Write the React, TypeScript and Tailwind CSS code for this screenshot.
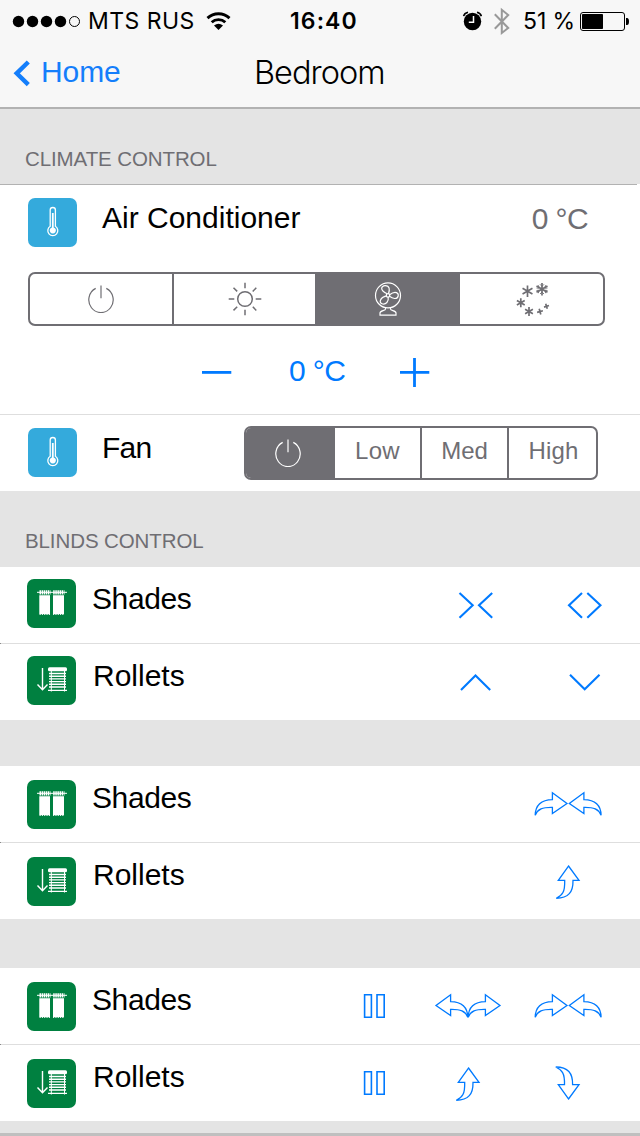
import type { ReactNode } from "react";

const RIGHT_ARROW = "M1.2 31.2C1.4 21.5 6.5 15.9 18.4 15.6V8.8L33 19.5L18.4 29.6V23.4C8.5 23.2 3.8 25 1.2 31.2Z";

function Thermometer() {
  return (
    <svg className="size-[49px] shrink-0" viewBox="0 0 49 49" fill="none">
      <rect width="49" height="49" rx="7" fill="#34aadc" />
      <path d="M22.2 28.3V12Q22.2 9.5 24.8 9.5Q27.4 9.5 27.4 12V28.3A5 5 0 1 1 22.2 28.3Z" stroke="#fff" strokeWidth="1.3" />
      <path d="M23.9 15h1.8v14.4a3.1 3.1 0 1 1-1.8 0Z" fill="#fff" />
    </svg>
  );
}

function ShadesTile() {
  return (
    <svg className="size-[49px]" viewBox="0 0 49 49" fill="none" stroke="#fff">
      <rect width="49" height="49" rx="7" fill="#008040" stroke="none" />
      <path d="M10 13.3H40" strokeWidth="1" />
      <path d="M12.5 13.3H23.5M26.2 13.3H37.5" strokeWidth="4.2" strokeDasharray="1.5 .6" />
      <path d="M12.3 16.2H23V35H12.3ZM26 16.2H37V35H26Z" fill="#fff" stroke="none" />
      <path d="M12.5 35.4H23M26 35.4H37" strokeWidth="1" strokeDasharray="1.3 1" />
    </svg>
  );
}

function RolletsTile() {
  return (
    <svg className="size-[49px]" viewBox="0 0 49 49" fill="none" stroke="#fff">
      <rect width="49" height="49" rx="7" fill="#008040" stroke="none" />
      <path d="M15.5 12V33.5M10.5 28.5L15.5 33.8L20.5 28.5" strokeWidth="1.4" />
      <rect x="21" y="11.2" width="19" height="4" rx="1.5" fill="#fff" stroke="none" />
      <path d="M24.3 15V35.5M37.5 15V35.5" strokeWidth="1" />
      <path d="M22 17.5H39M22 20.2H39M22 22.9H39M22 25.6H39M22 28.3H39M22 31H39M21 34.4H40" strokeWidth="1.4" />
    </svg>
  );
}

function Power() {
  return (
    <svg className="h-7 w-7" viewBox="0 0 28 28" fill="none" stroke="currentColor" strokeWidth="1.2">
      <path d="M14 .4V13.2M8.7 3.4A12.2 12.7 0 1 0 19.3 3.4" />
    </svg>
  );
}

function Sun() {
  return (
    <svg className="size-[34px]" viewBox="0 0 34 34" fill="none" stroke="currentColor" strokeWidth="1.5">
      <circle cx="17" cy="17" r="7.3" />
      <path d="M17 .8V6.2M17 27.8V33.2M.7 17H6.3M27.7 17H33.3M5.5 5.7L9.2 9.4M24.8 24.8L28.3 28.4M28.3 5.7L24.7 9.4M9.2 24.8L5.5 28.4" />
    </svg>
  );
}

function FanIcon() {
  return (
    <svg className="h-[34px] w-7" viewBox="0 0 28 34" fill="none" stroke="currentColor" strokeWidth="1.2">
      <circle cx="14" cy="13.4" r="12.5" />
      <circle cx="14" cy="13.4" r="1.7" />
      <path d="M13.2 11.8C5 8 7.3 3.6 11.2 3.7C15.7 3.8 16 7.5 14.5 11.7M15.6 12.7C22 7.8 24.7 11.6 24.2 14C23.2 18 18.4 16.5 15.5 14.3M14.2 15C15 20 11.7 22.4 8.8 22C4.3 21.2 5.8 15.5 12.5 13.9M11.5 26V27C11.5 28.8 6 28.5 6 31V33.2H22V31C22 28.5 16.5 28.8 16.5 27V26" />
    </svg>
  );
}

function Flake({ x, y, r, arms = 6 }: { x: number; y: number; r: number; arms?: number }) {
  return (
    <g transform={`translate(${x} ${y})`}>
      {arms === 4 ? (
        <path d={`M-${r} .8L${r} -.8M-.8 -${r}L.8 ${r}`} />
      ) : (
        <path d={`M0 -${r}V${r}M-${r * 0.87} -${r / 2}L${r * 0.87} ${r / 2}M-${r * 0.87} ${r / 2}L${r * 0.87} -${r / 2}`} />
      )}
    </g>
  );
}

function Snow() {
  return (
    <svg className="ml-[2px] h-[34px] w-[34px]" viewBox="0 0 34 34" fill="none" stroke="currentColor" strokeWidth="1.7">
      <Flake x={11.5} y={9.2} r={5.7} />
      <Flake x={26} y={7.2} r={6.3} />
      <path d="M24 2.3L26 4.3L28 2.3M24 12L26 10L28 12M20.5 6L23.2 6.2L22.3 3.2M31.5 6L28.8 6.2L29.7 3.2M20.5 8.5L23.2 8.2L22.3 11.2M31.5 8.5L28.8 8.2L29.7 11.2" strokeWidth=".9" />
      <Flake x={4.8} y={20.7} r={4.5} />
      <Flake x={13} y={29.5} r={4.5} />
      <Flake x={24} y={29.6} r={2.9} arms={4} />
      <Flake x={30.5} y={24.3} r={2.5} arms={4} />
    </svg>
  );
}

function Action({ children, bold = false, label }: { children: ReactNode; bold?: boolean; label: string }) {
  return (
    <button aria-label={label} className="mt-[18px] h-10 w-[68px] text-[#007aff]">
      <svg className="h-10 w-[68px]" viewBox="0 0 68 40" fill="none" stroke="currentColor" strokeWidth={bold ? 2.1 : 1.3}>
        {children}
      </svg>
    </button>
  );
}

const Pause = () => (
  <Action label="Pause">
    <path d="M24.6 8.8H31.4V31.2H24.6ZM37 8.8H44.2V31.2H37Z" strokeWidth="1.6" />
  </Action>
);
const Inward = () => (
  <Action label="Close">
    <path d={RIGHT_ARROW} />
    <path d={RIGHT_ARROW} transform="matrix(-1 0 0 1 68.3 0)" />
  </Action>
);
const Outward = () => (
  <Action label="Open">
    <path d={RIGHT_ARROW} transform="matrix(-1 0 0 1 35 0)" />
    <path d={RIGHT_ARROW} transform="translate(33 0)" />
  </Action>
);
const RaiseArrow = () => (
  <Action label="Raise">
    <path d="M34.5 5L45 19.4H39C39.2 31 34.5 37.2 22.3 37.3C28.5 34.3 31 31 30.7 19.4H24.3Z" />
  </Action>
);
const LowerArrow = () => (
  <Action label="Lower">
    <path d="M34.5 36L45 21.6H38.6C38.8 10 34 4.1 21.8 4C28 7 30.8 10 30.5 21.6H24.3Z" />
  </Action>
);

function Divider() {
  return (
    <div className="h-px bg-[#dedede]">
      <div className="h-px w-px bg-[#8a8a8a]" />
    </div>
  );
}

function BlindRow({ kind, low, actions }: { kind: "Shades" | "Rollets"; low?: boolean; actions: ReactNode }) {
  return (
    <div className="flex h-[76px] items-start bg-white pr-[38px] pl-[27px]">
      <div className={low ? "mt-[14px]" : "mt-3"}>{kind === "Shades" ? <ShadesTile /> : <RolletsTile />}</div>
      <span className={kind === "Shades" ? "mt-[17px] ml-4 text-[30px] leading-[30px] tracking-[-0.4px]" : "mt-[17px] ml-[17px] text-[30px] leading-[30px]"}>{kind}</span>
      <div className="ml-auto flex">{actions}</div>
    </div>
  );
}

function StatusBar() {
  return (
    <div className="grid h-10 grid-cols-[290px_80px_1fr] items-center font-['Inter',sans-serif] text-[23px] leading-10 whitespace-nowrap">
      <div className="flex items-center pl-3">
        <svg className="h-10 w-[70px]" viewBox="0 0 70 40">
          <circle cx="6.5" cy="20.5" r="5.7" />
          <circle cx="20.5" cy="20.5" r="5.7" />
          <circle cx="34.5" cy="20.5" r="5.7" />
          <circle cx="48.5" cy="20.5" r="5.7" />
          <circle cx="62.5" cy="20.5" r="5" fill="none" stroke="#000" strokeWidth="1" />
        </svg>
        <span className="ml-[6px] w-[117px] pt-px tracking-[0.45px]">MTS RUS</span>
        <svg className="h-10 w-7" viewBox="0 0 28 40" fill="none" stroke="#000" strokeWidth="2.9">
          <path d="M2.5 17.1A16 16 0 0 1 24.5 17.1M6.7 21.3A10 10 0 0 1 20.3 21.3" />
          <path d="M9 24.4Q13.5 21 18 24.4L13.5 29Z" fill="#000" stroke="none" />
        </svg>
      </div>
      <span className="pt-px font-semibold tracking-[1.1px]">16:40</span>
      <div className="flex items-center">
        <svg className="ml-[92px] h-10 w-5" viewBox="0 0 20 40" fill="none">
          <circle cx="10.5" cy="20.5" r="8.7" fill="#000" />
          <path d="M1.6 15.2Q2.3 12 6 11.2M15 11.2Q18.6 12 19.4 15.2" stroke="#000" strokeWidth="1.6" />
          <path d="M11.5 15V21.3H6.8" stroke="#fff" strokeWidth="1.5" />
        </svg>
        <svg className="ml-3 h-10 w-4" viewBox="0 0 16 40" fill="none" stroke="#999" strokeWidth="2">
          <path d="M.8 13.3L14.2 27L7.8 32V8.8L14.2 14L.8 27.7" />
        </svg>
        <span className="ml-[13px] w-[57px] pt-px tracking-[-0.1px]">51 %</span>
        <svg className="h-10 w-[50px]" viewBox="0 0 50 40">
          <rect x=".5" y="11.5" width="44" height="18" rx="2.5" fill="none" stroke="#000" />
          <rect x="2" y="13" width="21" height="15" rx=".8" />
          <path d="M46 17H47Q49 17 49 20.5Q49 24 47 24H46Z" />
        </svg>
      </div>
    </div>
  );
}

export default function App() {
  return (
    <main className="flex h-[1136px] w-[640px] flex-col overflow-hidden bg-[#e4e4e4] font-['Liberation_Sans',Arial,sans-serif] text-black">
      <header className="h-[109px] border-b-2 border-[#b2b2b2] bg-[#f7f7f7]">
        <StatusBar />
        <nav className="grid h-[67px] grid-cols-[254px_1fr] items-start">
          <button className="flex items-start pl-[13px] text-[#147efb]">
            <svg className="mt-5 h-7 w-[18px]" viewBox="0 0 18 28" fill="none" stroke="currentColor" strokeWidth="4.4">
              <path d="M15.3 2L3.7 13.3L15.3 24.6" />
            </svg>
            <span className="mt-[17px] ml-[10px] text-[30px] leading-[30px] tracking-[-0.1px]">Home</span>
          </button>
          <h1 className="mt-[15px] font-['Inter',sans-serif] text-[32.5px] leading-9 font-light tracking-[-1px]">Bedroom</h1>
        </nav>
      </header>

      <h2 className="h-[75px] pt-[39px] pl-[25px] text-[20.5px] leading-[22px] tracking-[-0.1px] text-[#6f6e73]">CLIMATE CONTROL</h2>
      <div className="h-px bg-white pr-[3px]">
        <div className="h-px bg-[#b2b2b2]" />
      </div>
      <section className="h-[229px] bg-white pt-[13px]">
        <div className="flex h-[74px] items-start pr-[52px] pl-7">
          <Thermometer />
          <span className="mt-[5px] ml-[25px] text-[30px] leading-[30px]">Air Conditioner</span>
          <span className="mt-[6px] ml-auto text-[30px] leading-[30px] tracking-[-0.6px] text-[#6f6e73]">0 °C</span>
        </div>
        <div className="ml-7 grid h-[54px] w-[577px] grid-cols-[144px_141px_145px_143px] overflow-hidden rounded-[7px] border-2 border-[#6f6e73] text-[#6f6e73] *:flex *:items-center *:justify-center">
          <button className="border-r-2 border-[#6f6e73] pr-px"><Power /></button>
          <button><Sun /></button>
          <button className="bg-[#6f6e73] text-white"><FanIcon /></button>
          <button><Snow /></button>
        </div>
        <div className="flex items-start pt-[30px] pl-[201px] text-[#007aff]">
          <svg className="h-8 w-8" viewBox="0 0 32 32" stroke="currentColor" strokeWidth="2.8">
            <path d="M1 16.4H30.3" />
          </svg>
          <span className="ml-[56px] w-[110px] text-[30px] leading-[30px] tracking-[-0.6px]">0 °C</span>
          <svg className="h-8 w-8" viewBox="0 0 32 32" stroke="currentColor" strokeWidth="2.8">
            <path d="M1 16.4H30.3M15.5 2V31" />
          </svg>
        </div>
      </section>
      <div className="h-px bg-[#dedede]" />
      <section className="flex h-[76px] items-start bg-white pl-7">
        <div className="mt-[13px]"><Thermometer /></div>
        <span className="mt-[18px] ml-[25px] w-[142px] text-[30px] leading-[30px] tracking-[-0.8px]">Fan</span>
        <div className="mt-[11px] grid h-[54px] w-[354px] grid-cols-[89px_87px_87px_87px] overflow-hidden rounded-[7px] border-2 border-[#6f6e73] text-2xl leading-6 text-[#6f6e73] *:flex *:justify-center">
          <button className="items-center bg-[#6f6e73] pr-[5px] pb-px text-white"><Power /></button>
          <button className="border-r-2 border-[#6f6e73] pt-[11px] tracking-[0.3px]">Low</button>
          <button className="border-r-2 border-[#6f6e73] pt-[11px]">Med</button>
          <button className="pt-[11px] pl-[2px] tracking-[0.2px]">High</button>
        </div>
      </section>

      <h2 className="h-[76px] pt-[39px] pl-[25px] text-[20.5px] leading-[22px] tracking-[-0.1px] text-[#6f6e73]">BLINDS CONTROL</h2>
      <section>
        <BlindRow kind="Shades" actions={
          <div className="flex gap-6">
            <Action bold label="Close"><path d="M17.5 8L30.7 20.3L17.5 32.7M50.2 8L37 20.3L50.2 32.7" /></Action>
            <Action bold label="Open"><path d="M48 8L35 20.3L48 32.7M53.3 8L66.5 20.3L53.3 32.7" /></Action>
          </div>
        } />
        <Divider />
        <BlindRow kind="Rollets" actions={
          <div className="flex gap-6">
            <Action bold label="Raise"><path d="M19 28L33.5 13.5L48.2 28" /></Action>
            <Action bold label="Lower"><path d="M36 12.7L50.7 27.3L65.5 12.7" /></Action>
          </div>
        } />
      </section>
      <section className="mt-[46px]">
        <BlindRow kind="Shades" low actions={<Inward />} />
        <Divider />
        <BlindRow kind="Rollets" low actions={<RaiseArrow />} />
      </section>
      <section className="mt-[49px]">
        <BlindRow kind="Shades" low actions={<><Pause /><div className="mr-8 ml-[26px]"><Outward /></div><Inward /></>} />
        <Divider />
        <BlindRow kind="Rollets" low actions={<><Pause /><div className="mr-8 ml-[26px]"><RaiseArrow /></div><LowerArrow /></>} />
      </section>
      <footer className="mt-auto h-[3px] bg-[#bfbfbf]" />
    </main>
  );
}
